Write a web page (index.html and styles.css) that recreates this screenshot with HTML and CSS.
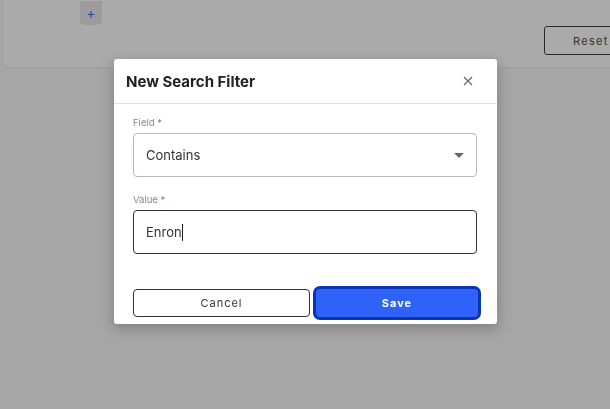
FILE: index.html
```html
<!doctype html>
<html lang="en">
<head>
<meta charset="utf-8">
<title>New Search Filter</title>
<link rel="stylesheet" href="styles.css">
</head>
<body>

<div class="page">
	<div class="card">
		<div class="add-row">
			<span class="add-btn">+</span>
		</div>
		<div class="card-actions">
			<button type="button" class="reset-btn">Reset All</button>
		</div>
	</div>
</div>

<div class="overlay">
	<div class="modal">
		<div class="modal-head">
			<h2>New Search Filter</h2>
			<span class="close">
				<svg width="10" height="10" viewBox="0 0 10 10"><path d="M1 1L9 9M9 1L1 9" stroke="#666" stroke-width="1.2"/></svg>
			</span>
		</div>

		<div class="modal-body">
			<div class="field">
				<label>Field <span class="req">*</span></label>
				<div class="box select">
					<span>Contains</span>
					<svg width="10" height="5" viewBox="0 0 10 5"><path d="M0 0H10L5 5Z" fill="#666"/></svg>
				</div>
			</div>

			<div class="field">
				<label>Value <span class="req">*</span></label>
				<div class="box input"><span>Enron</span><i class="caret"></i></div>
			</div>

			<div class="actions">
				<button type="button" class="btn btn--cancel">Cancel</button>
				<button type="button" class="btn btn--save">Save</button>
			</div>
		</div>
	</div>
</div>

</body>
</html>
```

FILE: styles.css
```css
body {
	margin: 0;
	padding: 0;
	font-family: 'Inter', sans-serif;
	background: #a6a6a6;
	overflow: hidden;
}

.page {
	height: 409px;
	padding: 0 0 0 2px;
}

.card {
	height: 78px;
	margin-top: -10px;
	padding: 10px 0 0 77px;
	box-sizing: border-box;
	background: #aaaaaa;
	border: 1px solid #9d9d9d;
	border-right: 0;
	border-radius: 0 0 0 5px;
	display: flex;
	flex-direction: column;
}

.add-btn {
	display: flex;
	align-items: center;
	justify-content: center;
	width: 22px;
	height: 24px;
	background: #9c9c9c;
	border-radius: 0 0 5px 5px;
	color: #2a45a8;
	font-size: 14px;
	line-height: 1;
}

.card-actions {
	display: flex;
	justify-content: flex-end;
	margin-top: 1px;
}

.reset-btn {
	width: 100px;
	height: 29px;
	margin-right: -34px;
	padding: 0 0 0 28px;
	text-align: left;
	background: transparent;
	border: 1px solid #2a2a2a;
	border-radius: 3px;
	font-family: inherit;
	font-size: 11px;
	letter-spacing: 1.3px;
	color: #333;
	white-space: nowrap;
}

.overlay {
	position: fixed;
	top: 0;
	left: 0;
	right: 0;
	bottom: 0;
	display: flex;
	justify-content: center;
	padding-top: 59px;
}

.modal {
	width: 383px;
	height: 265px;
	margin-left: 1px;
	background: #fff;
	border-radius: 3px;
	box-shadow: 0 4px 14px rgba(0, 0, 0, 0.25);
	overflow: hidden;
}

.modal-head {
	display: flex;
	align-items: center;
	justify-content: space-between;
	height: 44px;
	padding: 0 24px 0 12px;
	border-bottom: 1px solid #e3e3e3;
}

h2 {
	margin: 0;
	font-size: 15px;
	font-weight: 700;
	color: #222;
}

.close {
	display: flex;
}

.modal-body {
	padding: 13px 20px 0 19px;
}

.field {
	margin-bottom: 17px;
}

.field + .field {
	margin-bottom: 0;
}

label {
	display: block;
	margin-bottom: 5px;
	font-size: 9.5px;
	color: #888;
}

.req {
	color: #5b7df0;
}

.box {
	display: flex;
	align-items: center;
	justify-content: space-between;
	height: 44px;
	box-sizing: border-box;
	padding: 0 12px;
	border: 1px solid #b8b8b8;
	border-radius: 4px;
	font-size: 13px;
	color: #333;
}

.input {
	justify-content: flex-start;
	border-color: #333;
}

.caret {
	display: inline-block;
	width: 1px;
	height: 17px;
	background: #222;
}

.actions {
	display: flex;
	gap: 3px;
	margin-top: 32px;
}

.btn {
	flex-shrink: 0;
	font-family: inherit;
	font-size: 11px;
	letter-spacing: 1px;
	border-radius: 4px;
}

.btn--cancel {
	width: 177px;
	height: 28px;
	margin-top: 3px;
	background: #fff;
	border: 1px solid #333;
	color: #333;
}

.btn--save {
	width: 168px;
	height: 34px;
	background: #2f63f7;
	border: 3px solid #0a35b5;
	border-radius: 7px;
	color: #fff;
	font-weight: 700;
}
```
